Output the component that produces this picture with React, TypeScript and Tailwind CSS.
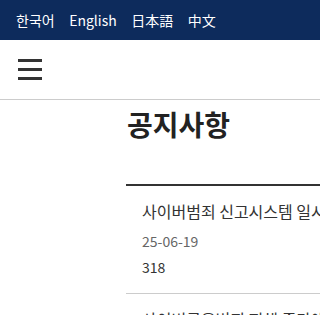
import React from "react";

export default function App() {
  const font = { fontFamily: '"Noto Sans CJK KR", "Noto Sans", sans-serif' };
  return (
    <div className="w-[320px] h-[315px] overflow-hidden bg-white" style={font}>
      <div className="h-[40px] bg-[#0d2b5c] flex items-center pl-[16px] gap-[14.5px] text-white text-[14px]">
        <span>한국어</span>
        <span>English</span>
        <span>日本語</span>
        <span>中文</span>
      </div>
      <div className="h-[60px] border-b border-[#cccccc] flex items-center pl-[18px]">
        <div className="flex flex-col gap-[6px] w-[24px]">
          <span className="block h-[3px] bg-[#333333]" />
          <span className="block h-[3px] bg-[#333333]" />
          <span className="block h-[3px] bg-[#333333]" />
        </div>
      </div>
      <div className="ml-[126px] w-[600px]">
        <h1 className="text-[28px] leading-[40px] font-bold text-[#222222] pt-[4px] pl-[1px]">공지사항</h1>
        <div className="mt-[40px] border-t-2 border-[#333333]">
          <div className="border-b border-[#cccccc] pl-[16px] pt-[13px] pb-[16px]">
            <div className="text-[16px] leading-[24px] text-[#333333] whitespace-nowrap">
              사이버범죄 신고시스템 일시 중단 안내
            </div>
            <div className="mt-[8px] text-[14px] leading-[20px] text-[#666666]">25-06-19</div>
            <div className="mt-[6px] text-[14px] leading-[20px] text-[#333333]">318</div>
          </div>
          <div className="pl-[16px] pt-[13px]">
            <div className="text-[16px] leading-[24px] text-[#333333] whitespace-nowrap">
              사이버금융범죄 피해 증가에 따른 주의 안내
            </div>
          </div>
        </div>
      </div>
    </div>
  );
}
